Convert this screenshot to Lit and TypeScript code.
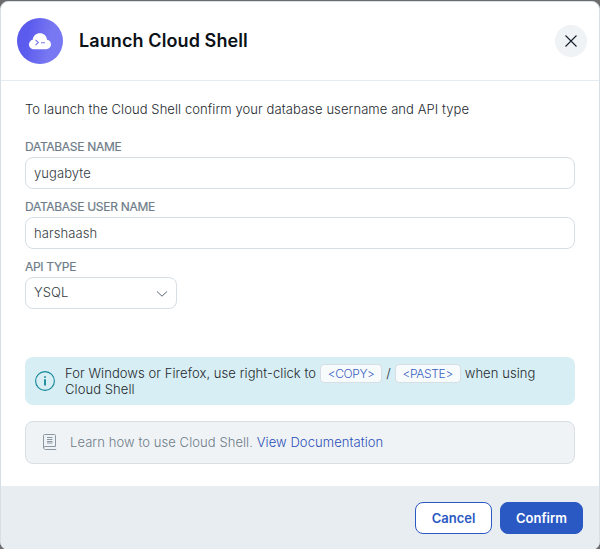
import { LitElement, html, css } from "lit";
import { customElement, property } from "lit/decorators.js";

@customElement("text-field")
class TextField extends LitElement {
  @property() label = "";
  @property() value = "";
  static styles = css`
    :host { display: block; height: 60px; }
    .label { height: 18px; font-size: 12px; line-height: 18px; font-weight: 400; letter-spacing: -0.3px; color: #6d7c88; -webkit-text-stroke: 0.2px #6d7c88; }
    .box { box-sizing: border-box; height: 32px; margin-top: 1px; border: 1px solid #d7dee4; border-radius: 8px; background: #fff; padding: 0 8px; display: flex; align-items: center; justify-content: space-between; font-size: 13px; letter-spacing: 0.08px; color: #333b42; }
    :host(.select) .box { padding-bottom: 2px; }
    ::slotted(svg) { margin-top: 3px; }
  `;
  render() {
    return html`<div class="label">${this.label}</div>
      <div class="box"><span>${this.value}</span><slot></slot></div>`;
  }
}

@customElement("app-root")
class AppRoot extends LitElement {
  static styles = css`
    :host { display: block; box-sizing: border-box; height: 549px; padding-top: 1px; overflow: hidden; background: #6c6c6e; font-family: Inter, "Liberation Sans", sans-serif; font-size: 13px; font-weight: 350; color: #24292e; }
    svg { display: block; flex: none; }
    .dialog { box-sizing: border-box; height: 549px; border: 1px solid #d7dee4; border-radius: 8px; overflow: hidden; background: #fff; display: flex; flex-direction: column; }
    header { box-sizing: border-box; height: 79px; flex: none; border-bottom: 1px solid #e5ecf1; display: flex; align-items: center; padding: 0 12px 0 16px; }
    .logo { width: 46px; height: 46px; border-radius: 50%; background: linear-gradient(100deg, #5b5bee 25%, #7878f2 70%); display: flex; align-items: center; justify-content: center; }
    h1 { margin: 0 0 1px 16px; flex: 1; font-size: 18px; line-height: 24px; font-weight: 600; letter-spacing: 0.1px; color: #0b1117; }
    .close { width: 32px; height: 32px; border-radius: 50%; background: #eff3f6; display: flex; align-items: center; justify-content: center; }
    main { flex: 1; padding: 19px 24px 0; }
    .intro { height: 18px; line-height: 18px; margin-bottom: 20px; letter-spacing: 0.08px; }
    .select { width: 152px; }
    .info { box-sizing: border-box; height: 48px; margin-top: 39px; padding: 0 10px; border-radius: 8px; background: #d7eef4; display: flex; align-items: center; gap: 10px; line-height: 16px; letter-spacing: 0.07px; }
    .line { display: flex; align-items: center; height: 16px; gap: 4px; white-space: nowrap; }
    .key { box-sizing: border-box; flex: none; width: 62px; height: 19px; border: 1px solid #d7dee4; border-radius: 4px; background: #f7fbfc; font-size: 12px; line-height: 17px; letter-spacing: -0.35px; color: #3b5fc2; text-align: center; }
    .paste { width: 66px; }
    .docs { box-sizing: border-box; height: 43px; margin-top: 16px; padding: 0 16px 1px; border: 1px solid #d7dee4; border-radius: 8px; background: #f0f3f6; display: flex; align-items: center; gap: 12px; color: #6d7c88; letter-spacing: 0.075px; }
    a { color: #2b50b8; }
    footer { box-sizing: border-box; height: 63px; flex: none; background: #e8edf1; padding: 1px 16px 0; display: flex; align-items: center; justify-content: flex-end; gap: 8px; }
    button { box-sizing: border-box; height: 32px; border: 1px solid #2b59c3; border-radius: 8px; padding: 0 0 1px; font: 600 13px Inter, sans-serif; }
    .cancel { width: 77px; background: #fff; color: #2b59c3; }
    .confirm { width: 83px; background: #2b59c3; color: #fff; }
  `;

  render() {
    return html`<div class="dialog">
      <header>
        <div class="logo">
          <svg width="24" height="18" viewBox="0 0 24 18">
            <path fill="#fff" d="M6.200 17.200C3.300 17.200 1 15.100 1 12.400C1 10.100 2.600 8.300 4.700 7.800C5.200 3.900 8 1.300 12 1.300C15.700 1.300 18.600 4 19 7.700C21.400 8 23 9.900 23 12.300C23 15 21 17.200 18.100 17.200Z"/>
            <path d="M7.500 7.800l2.800 2.700-2.800 2.700M13 10.700h4" fill="none" stroke="#7474f0" stroke-width="1.100"/>
          </svg>
        </div>
        <h1>Launch Cloud Shell</h1>
        <div class="close">
          <svg width="12" height="12" viewBox="0 0 12 12"><path d="M.5.500l11 11M11.500.500l-11 11" stroke="#16202d" stroke-width="1.100"/></svg>
        </div>
      </header>
      <main>
        <div class="intro">To launch the Cloud Shell confirm your database username and API type</div>
        <text-field label="DATABASE NAME" value="yugabyte"></text-field>
        <text-field label="DATABASE USER NAME" value="harshaash"></text-field>
        <text-field class="select" label="API TYPE" value="YSQL">
          <svg width="12" height="6" viewBox="0 0 12 6"><path d="M1 .5L6 5.200L11 .5" fill="none" stroke="#5b6875" stroke-width="1"/></svg>
        </text-field>
        <div class="info">
          <svg width="20" height="20" viewBox="0 0 20 20"><circle cx="10" cy="10" r="9.400" fill="none" stroke="#138698" stroke-width="1.100"/><path d="M9.100 8.200h1.800v6.300H9.100zM9.100 5.200h1.800v1.600H9.100z" fill="#138698"/></svg>
          <div>
            <div class="line"><span>For Windows or Firefox, use right-click to</span><span class="key">&lt;COPY&gt;</span><span>/</span><span class="key paste">&lt;PASTE&gt;</span><span>when using</span></div>
            <div class="line">Cloud Shell</div>
          </div>
        </div>
        <div class="docs">
          <svg width="16" height="18" viewBox="0 0 16 18"><path d="M14.200 16.500H3.500C2.300 16.500 1.500 15.700 1.500 14.700V2.500Q1.500 1.500 2.500 1.500H12.500Q13.500 1.500 13.500 2.500V13.500H3.200Q1.500 13.500 1.500 15" fill="none" stroke="#8b98a4"/><path d="M5 4.500h5.500M5 6.500h5.500M5 8.500h5.500M5 10h5.500" stroke="#8b98a4"/></svg>
          <span>Learn how to use Cloud Shell. <a>View Documentation</a></span>
        </div>
      </main>
      <footer><button class="cancel">Cancel</button><button class="confirm">Confirm</button></footer>
    </div>`;
  }
}
